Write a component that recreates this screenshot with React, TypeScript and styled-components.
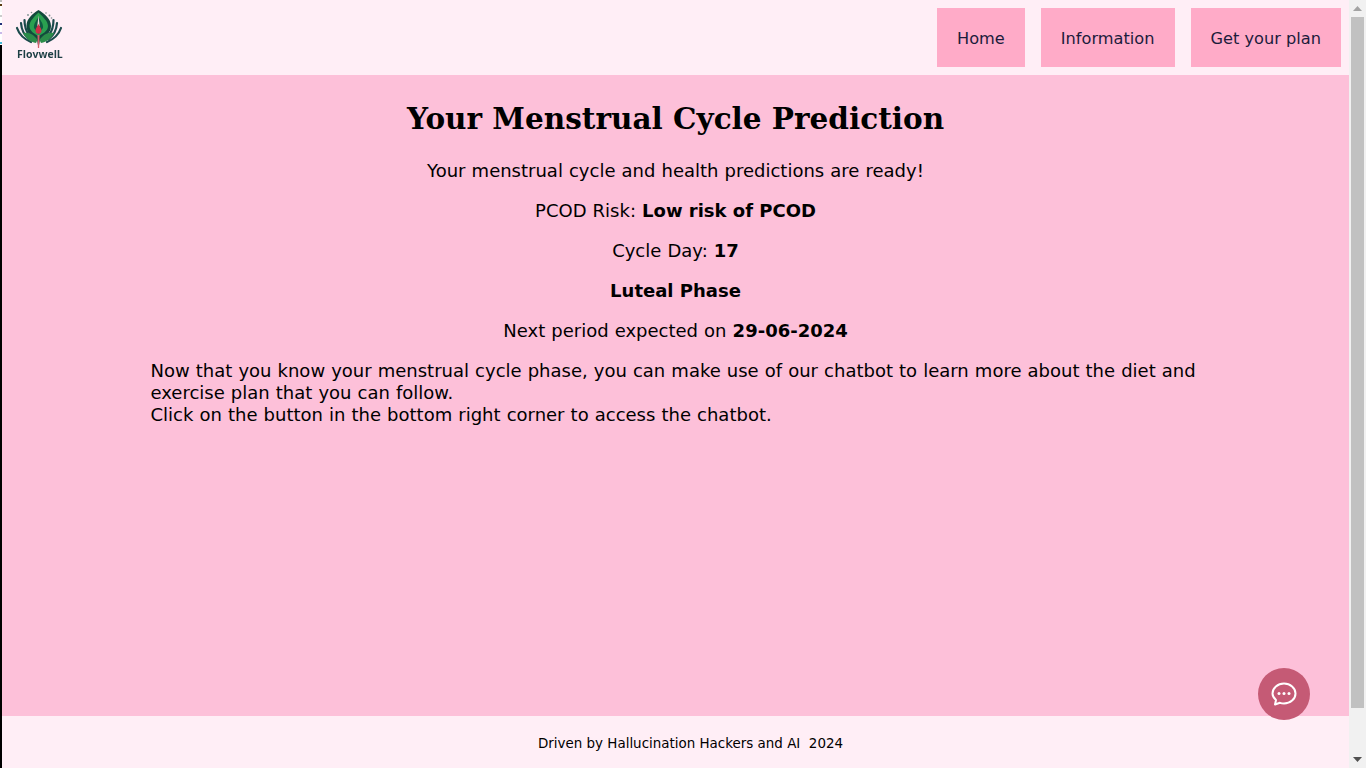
import React from "react";
import styled, { createGlobalStyle } from "styled-components";

const Global = createGlobalStyle`
  html, body { margin: 0; padding: 0; height: 100%; overflow: hidden; }
  #root { height: 100%; }
  * { box-sizing: border-box; }
`;

const Page = styled.div`
  display: flex;
  height: 768px;
  width: 1366px;
  font-family: "DejaVu Sans", Verdana, sans-serif;
  color: #000;
  background: #ffeef6;
`;

const LeftEdge = styled.div`
  width: 2px;
  flex: none;
  display: flex;
  flex-direction: column;
`;

const EdgeTop = styled.div`
  height: 45px;
  background: linear-gradient(
    to bottom,
    #bbb 0 2px, #fff 2px 4px, #5a3a10 4px 6px, #fff 6px 15px, #ccc 15px 17px, #fff 17px 23px,
    #23307a 23px 25px, #fff 25px 32px, #c8b8e8 32px 34px, #fff 34px 42px, #45b8d8 42px 44px, #fff 44px 45px
  );
`;

const EdgeBottom = styled.div`
  flex: 1;
  background: #000;
`;

const Main = styled.div`
  flex: 1;
  min-width: 0;
  display: flex;
  flex-direction: column;
  position: relative;
`;

const Header = styled.header`
  height: 75px;
  flex: none;
  background: #ffeef6;
  display: flex;
  align-items: center;
  justify-content: space-between;
  padding: 0 8px 0 13px;
`;

const Logo = styled.svg`
  width: 50px;
  height: 58px;
  display: block;
  align-self: flex-start;
  margin-top: 8px;
  filter: blur(0.4px);
`;

const Nav = styled.nav`
  display: flex;
  gap: 16px;
`;

const NavLink = styled.a`
  height: 59px;
  padding: 2px 20px 0;
  display: flex;
  align-items: center;
  background: #ffabc8;
  color: #1c1c3c;
  font-size: 16.2px;
`;

const Content = styled.main`
  flex: 1;
  background: #fdc0d9;
  display: flex;
  flex-direction: column;
  align-items: center;
  padding-top: 25px;
  font-size: 18px;
  line-height: 22px;
  word-spacing: 0.35px;

  b {
    word-spacing: 0;
  }
`;

const Title = styled.h1`
  margin: 0 0 22px;
  font-family: "DejaVu Serif", Georgia, serif;
  font-size: 29.5px;
  line-height: 38px;
  font-weight: 700;
  word-spacing: 0;
`;

const Line = styled.p`
  margin: 0 0 18px;
  text-align: center;
`;

const Note = styled.p`
  margin: 0;
  width: 1050px;
`;

const Footer = styled.footer`
  height: 52px;
  flex: none;
  background: #ffeef6;
  display: flex;
  align-items: center;
  justify-content: center;
  padding: 2px 0 0 30px;
  font-size: 13.45px;
  white-space: pre;
`;

const ChatButton = styled.button`
  position: absolute;
  left: 1256px;
  top: 668px;
  width: 52px;
  height: 52px;
  border: 0;
  border-radius: 50%;
  background: #c55a75;
  display: flex;
  align-items: center;
  justify-content: center;
  padding: 0;
`;

const Scrollbar = styled.div`
  width: 17px;
  flex: none;
  background: #f1f1f1;
  display: flex;
  flex-direction: column;
  align-items: center;
`;

const ArrowBox = styled.div`
  height: 17px;
  width: 17px;
  display: flex;
  align-items: center;
  justify-content: center;
  flex: none;
`;

const Thumb = styled.div`
  width: 13px;
  height: 691px;
  background: #c1c1c1;
  flex: none;
`;

const Spacer = styled.div`
  flex: 1;
`;

export default function App() {
  return (
    <Page>
      <Global />
      <LeftEdge>
        <EdgeTop />
        <EdgeBottom />
      </LeftEdge>
      <Main>
        <Header>
          <Logo viewBox="15 8 50 58">
            <g fill="none" stroke="#1b4a4c" strokeWidth="2.2" strokeLinecap="round">
              <path d="M17 28C19 34 24 39 31 42" />
              <path d="M61 28C59 34 54 39 47 42" />
              <path d="M21 23C21.500 30 24 35 29 39" />
              <path d="M57 23C56.500 30 54 35 49 39" />
              <path d="M24.500 20C24.500 27 26 31 29 35" />
              <path d="M53.500 20C53.500 27 52 31 49 35" />
            </g>
            <path d="M38.500 10C32 14 26.500 19 26.500 26C26.500 33 32 37 37 40L38.500 48L40 40C45 37 51 33 51 26C51 19 45 14 38.500 10Z" fill="#124a3c" />
            <path d="M38.500 12.500C34.500 16.500 29.500 21 29.500 26C29.500 31 34.500 34 38.500 36C42.500 34 48 31 48 26C48 21 42.500 16.500 38.500 12.500Z" fill="#2aa050" />
            <path d="M38.500 17C36 21 33.500 24 34 28L38.500 34L43 28C43.500 24 41 21 38.500 17Z" fill="#0f5c42" />
            <path d="M38.500 15.500L39.700 26H37.300Z" fill="#eaded6" />
            <path d="M38.500 24C37 27 35.500 28.500 35.500 30.500C35.500 32.800 37 33.800 38.500 33.800C40 33.800 41.500 32.800 41.500 30.500C41.500 28.500 40 27 38.500 24Z" fill="#cc2f48" />
            <path d="M23 33C29 31.500 34.500 35 37.500 40L36 43C30 42 26 38.500 23 33Z" fill="#2c8c4a" />
            <path d="M54 33C48 31.500 42.500 35 39.500 40L41 43C47 42 51 38.500 54 33Z" fill="#2c8c4a" />
            <path d="M37.500 35H39.500L39.100 48H37.900Z" fill="#d2606c" />
            <g fill="#7e908e">
              <circle cx="28" cy="15" r="0.900" />
              <circle cx="31.500" cy="12.500" r="0.800" />
              <circle cx="46" cy="13" r="0.800" />
              <circle cx="49.500" cy="15.500" r="0.900" />
              <circle cx="51.500" cy="18" r="0.800" />
            </g>
            <text x="17" y="58" fontFamily="'Open Sans', sans-serif" fontWeight="700" fontSize="10.5" fill="#1d3f45">FlovwelL</text>
          </Logo>
          <Nav>
            <NavLink>Home</NavLink>
            <NavLink>Information</NavLink>
            <NavLink>Get your plan</NavLink>
          </Nav>
        </Header>
        <Content>
          <Title>Your Menstrual Cycle Prediction</Title>
          <Line>Your menstrual cycle and health predictions are ready!</Line>
          <Line>PCOD Risk: <b>Low risk of PCOD</b></Line>
          <Line>Cycle Day: <b>17</b></Line>
          <Line><b>Luteal Phase</b></Line>
          <Line>Next period expected on <b>29-06-2024</b></Line>
          <Note>
            Now that you know your menstrual cycle phase, you can make use of our chatbot to learn more about the diet and exercise plan that you can follow.
            <br />
            Click on the button in the bottom right corner to access the chatbot.
          </Note>
        </Content>
        <Footer>{"Driven by Hallucination Hackers and AI  2024"}</Footer>
        <ChatButton aria-label="Chat">
          <svg width="26" height="26" viewBox="0 0 26 26" fill="none">
            <path d="M13 2.500C19.300 2.500 24.500 6.900 24.500 12.500C24.500 18.100 19.300 22.500 13 22.500C11.500 22.500 10.200 22.300 9 21.800L4 23.500L5 19C2.900 17.200 1.500 15 1.500 12.500C1.500 6.900 6.700 2.500 13 2.500Z" stroke="#fff" strokeWidth="2" strokeLinejoin="round" />
            <circle cx="8" cy="12.500" r="1.500" fill="#fff" />
            <circle cx="13" cy="12.500" r="1.500" fill="#fff" />
            <circle cx="18" cy="12.500" r="1.500" fill="#fff" />
          </svg>
        </ChatButton>
      </Main>
      <Scrollbar>
        <ArrowBox>
          <svg width="9" height="5" viewBox="0 0 9 5"><path d="M4.500 0L9 5H0Z" fill="#a3a3a3" /></svg>
        </ArrowBox>
        <Thumb />
        <Spacer />
        <ArrowBox>
          <svg width="9" height="5" viewBox="0 0 9 5"><path d="M0 0H9L4.500 5Z" fill="#505050" /></svg>
        </ArrowBox>
      </Scrollbar>
    </Page>
  );
}
